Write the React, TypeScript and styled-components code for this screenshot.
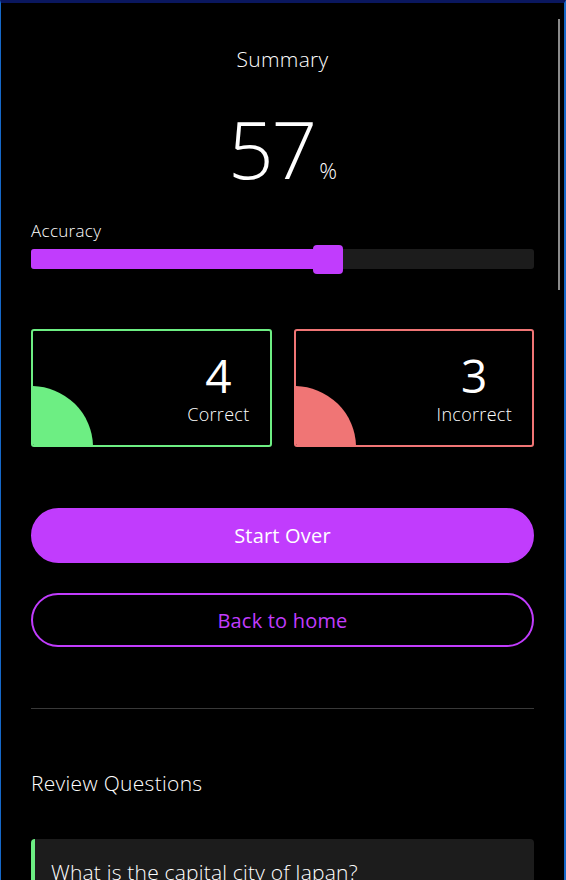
import React from "react";
import styled, { createGlobalStyle } from "styled-components";

const colors = {
  purple: "#c13cfd",
  green: "#6dee83",
  red: "#f07575",
  track: "#1c1c1c",
  line: "#393939",
};

type Question = {
  id: number;
  text: string;
  options: string[];
  answer: string;
  picked: string;
};

const questions: Question[] = [
  { id: 1, text: "What is the capital city of Japan?", options: ["Tokyo", "Osaka", "Kyoto", "Nagoya"], answer: "Tokyo", picked: "Tokyo" },
  { id: 2, text: "Which planet is known as the Red Planet?", options: ["Venus", "Mars", "Jupiter", "Saturn"], answer: "Mars", picked: "Mars" },
  { id: 3, text: "What is the largest ocean on Earth?", options: ["Atlantic", "Indian", "Arctic", "Pacific"], answer: "Pacific", picked: "Atlantic" },
  { id: 4, text: "Who painted the Mona Lisa?", options: ["Van Gogh", "Picasso", "Da Vinci", "Monet"], answer: "Da Vinci", picked: "Da Vinci" },
  { id: 5, text: "How many continents are there?", options: ["5", "6", "7", "8"], answer: "7", picked: "6" },
  { id: 6, text: "What is the chemical symbol for gold?", options: ["Ag", "Au", "Gd", "Go"], answer: "Au", picked: "Au" },
  { id: 7, text: "Which is the longest river in the world?", options: ["Amazon", "Nile", "Yangtze", "Danube"], answer: "Nile", picked: "Amazon" },
];

const accuracy = 57;

const GlobalStyle = createGlobalStyle`
  html, body {
    margin: 0;
    padding: 0;
    background: #000;
  }
  body {
    font-family: "Open Sans", "Noto Sans", sans-serif;
    color: #fff;
    overflow: hidden;
  }
  * { box-sizing: border-box; }
`;

const Frame = styled.div`
  height: 880px;
  display: flex;
  align-items: flex-start;
  border-top: 3px solid #0a175e;
  border-left: 1px solid #1668c8;
  border-right: 2px solid #1668c8;
  background: #000;
  overflow: hidden;
`;

// the scroll rail on the right edge, drawn as its own column
const Rail = styled.div`
  flex: 0 0 11px;
  display: flex;
  justify-content: center;
  padding-top: 16px;
`;

const RailThumb = styled.div`
  width: 2px;
  height: 271px;
  margin-left: 1px;
  background: #8b8b8b;
`;

const Page = styled.main`
  flex: 1;
  min-width: 0;
  display: flex;
  flex-direction: column;
  padding: 41px 19px 40px 30px;

  & > * {
    flex-shrink: 0;
  }
`;

const Title = styled.h1`
  margin: 0;
  font-size: 21px;
  line-height: 30px;
  font-weight: 300;
  letter-spacing: 0.3px;
  text-align: center;
`;

const Score = styled.div`
  display: flex;
  align-items: baseline;
  justify-content: center;
  margin-top: 34px;
`;

const ScoreValue = styled.span`
  font-size: 80px;
  line-height: 80px;
  font-weight: 300;
  letter-spacing: -2px;
`;

const ScoreUnit = styled.span`
  font-size: 22px;
  font-weight: 300;
  margin-left: 4px;
`;

const Label = styled.div`
  margin-top: 33px;
  font-size: 17px;
  line-height: 20px;
  font-weight: 300;
  letter-spacing: 0.3px;
`;

const Track = styled.div`
  position: relative;
  margin-top: 8px;
  height: 20px;
  border-radius: 3px;
  background: ${colors.track};
`;

const Fill = styled.div`
  height: 100%;
  border-radius: 3px 0 0 3px;
  background: ${colors.purple};
`;

const Thumb = styled.div`
  position: absolute;
  top: -4px;
  width: 30px;
  height: 29px;
  border-radius: 4px;
  background: ${colors.purple};
`;

const Stats = styled.div`
  display: grid;
  grid-template-columns: 1fr 1fr;
  gap: 22px;
  margin-top: 60px;
`;

const StatCard = styled.div<{ $tone: string }>`
  position: relative;
  height: 118px;
  border: 2px solid ${(p) => p.$tone};
  border-radius: 3px;
  display: flex;
  justify-content: flex-end;
  padding: 21px 20px 0 0;
  overflow: hidden;
`;

const Quarter = styled.div<{ $tone: string }>`
  position: absolute;
  left: -2px;
  bottom: -2px;
  width: 62px;
  height: 61px;
  border-top-right-radius: 62px 61px;
  background: ${(p) => p.$tone};
`;

const StatText = styled.div`
  display: flex;
  flex-direction: column;
  align-items: center;
  gap: 5px;
`;

const StatNumber = styled.span`
  font-size: 46px;
  line-height: 46px;
  font-weight: 400;
`;

const StatLabel = styled.span`
  font-size: 18px;
  line-height: 22px;
  font-weight: 300;
  letter-spacing: 0.3px;
`;

const Button = styled.button<{ $outline?: boolean }>`
  height: ${(p) => (p.$outline ? 54 : 55)}px;
  border-radius: 28px;
  border: 2px solid ${colors.purple};
  background: ${(p) => (p.$outline ? "transparent" : colors.purple)};
  color: ${(p) => (p.$outline ? colors.purple : "#fff")};
  font-family: inherit;
  font-size: 20px;
  font-weight: 400;
  letter-spacing: 0.2px;
  cursor: pointer;
`;

const Actions = styled.div`
  display: flex;
  flex-direction: column;
  gap: 30px;
  margin-top: 61px;
`;

const Divider = styled.hr`
  margin: 61px 0 0;
  border: none;
  border-top: 1px solid ${colors.line};
`;

const SectionTitle = styled.h2`
  margin: 59px 0 0;
  font-size: 21px;
  line-height: 30px;
  font-weight: 300;
  letter-spacing: 0.3px;
`;

const ReviewList = styled.div`
  display: flex;
  flex-direction: column;
  gap: 24px;
  margin-top: 41px;
`;

const ReviewCard = styled.div<{ $tone: string }>`
  display: flex;
  flex-direction: column;
  gap: 16px;
  padding: 18px 16px;
  background: ${colors.track};
  border-left: 4px solid ${(p) => p.$tone};
  border-radius: 4px;
`;

const QuestionText = styled.p`
  margin: 0;
  font-size: 21px;
  line-height: 30px;
  font-weight: 300;
  letter-spacing: 0.2px;
`;

const Options = styled.div`
  display: flex;
  flex-direction: column;
  gap: 8px;
`;

const Option = styled.div<{ $tone?: string }>`
  height: 36px;
  display: flex;
  align-items: center;
  padding: 0 14px;
  border-radius: 18px;
  border: 1px solid ${(p) => p.$tone ?? "#3a3a3a"};
  color: ${(p) => p.$tone ?? "#cfcfcf"};
  font-size: 15px;
  font-weight: 300;
`;

export default function App() {
  const correct = questions.filter((q) => q.picked === q.answer).length;
  const incorrect = questions.length - correct;

  return (
    <>
      <GlobalStyle />
      <Frame>
        <Page>
          <Title>Summary</Title>
          <Score>
            <ScoreValue>{accuracy}</ScoreValue>
            <ScoreUnit>%</ScoreUnit>
          </Score>

          <Label>Accuracy</Label>
          <Track>
            <Fill style={{ width: `${accuracy}%` }} />
            <Thumb style={{ left: `calc(${accuracy}% - 5px)` }} />
          </Track>

          <Stats>
            <StatCard $tone={colors.green}>
              <Quarter $tone={colors.green} />
              <StatText>
                <StatNumber>{correct}</StatNumber>
                <StatLabel>Correct</StatLabel>
              </StatText>
            </StatCard>
            <StatCard $tone={colors.red}>
              <Quarter $tone={colors.red} />
              <StatText>
                <StatNumber>{incorrect}</StatNumber>
                <StatLabel>Incorrect</StatLabel>
              </StatText>
            </StatCard>
          </Stats>

          <Actions>
            <Button>Start Over</Button>
            <Button $outline>Back to home</Button>
          </Actions>

          <Divider />

          <SectionTitle>Review Questions</SectionTitle>
          <ReviewList>
            {questions.map((q) => (
              <ReviewCard
                key={q.id}
                $tone={q.picked === q.answer ? colors.green : colors.red}
              >
                <QuestionText>{q.text}</QuestionText>
                <Options>
                  {q.options.map((o) => (
                    <Option
                      key={o}
                      $tone={
                        o === q.answer
                          ? colors.green
                          : o === q.picked
                          ? colors.red
                          : undefined
                      }
                    >
                      {o}
                    </Option>
                  ))}
                </Options>
              </ReviewCard>
            ))}
          </ReviewList>
        </Page>
        <Rail>
          <RailThumb />
        </Rail>
      </Frame>
    </>
  );
}
